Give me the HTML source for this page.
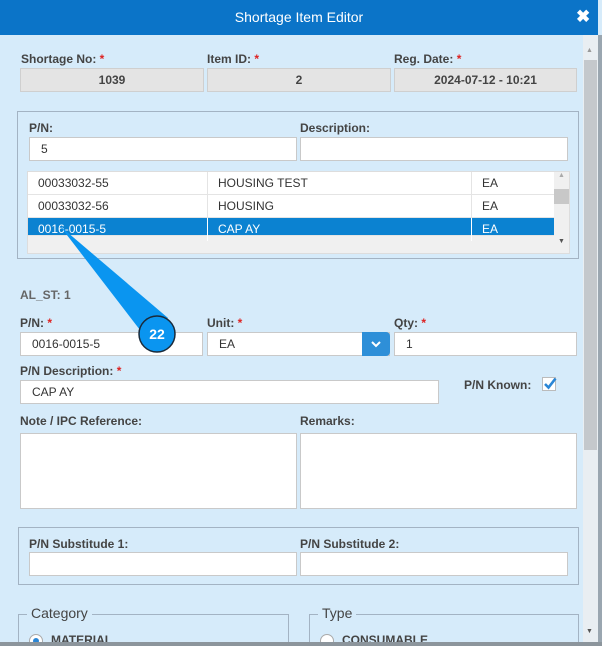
<!DOCTYPE html>
<html><head><style>
*{box-sizing:border-box;margin:0;padding:0}
html,body{width:602px;height:646px;overflow:hidden}
body{background:#d6ebfa;font-family:"Liberation Sans",Arial,sans-serif;font-size:12px;color:#333;position:relative}
.a{position:absolute}
.hd{left:0;top:0;width:598px;height:35px;background:#0b74c8;color:#fff;font-size:14px;text-align:center;line-height:35px}
.lb{font-weight:bold;font-size:12px;color:#444}
.lb i{color:#d22;font-style:normal}
.gb{background:#e4e4e4;border:1px solid #cfcfcf;height:24px;text-align:center;line-height:22px;font-weight:bold;color:#444}
.in{background:#fff;border:1px solid #c9c9c9;height:24px;line-height:22px;padding-left:11px;color:#333}
.fs{border:1px solid #a3b3c3}
.row{height:23px;line-height:22px;border-bottom:1px solid #e4e4e4;background:#fff}
.row span{position:absolute;top:0;padding-left:10px;height:23px;border-right:1px solid #e4e4e4}
.sel{background:#0b82d1;color:#fff}
</style></head><body>
<div class="a hd">Shortage Item Editor</div>
<div class="a" style="left:576px;top:7px;color:#fff;font-size:17px;font-weight:bold">✖</div>
<div class="a" style="left:598px;top:35px;width:4px;height:611px;background:#9aa6b0"></div>
<div class="a" style="left:583px;top:35px;width:15px;height:607px;background:#e9eef2"></div>
<div class="a" style="left:584px;top:60px;width:13px;height:390px;background:#c4c8cc"></div>
<div class="a" style="left:586px;top:47px;color:#999;font-size:7px">▲</div>
<div class="a" style="left:586px;top:628px;color:#555;font-size:7px">▼</div>

<div class="a lb" style="left:21px;top:52px">Shortage No: <i>*</i></div>
<div class="a lb" style="left:207px;top:52px">Item ID: <i>*</i></div>
<div class="a lb" style="left:394px;top:52px">Reg. Date: <i>*</i></div>
<div class="a gb" style="left:20px;top:68px;width:184px">1039</div>
<div class="a gb" style="left:207px;top:68px;width:184px">2</div>
<div class="a gb" style="left:394px;top:68px;width:183px">2024-07-12 - 10:21</div>

<div class="a fs" style="left:17px;top:111px;width:562px;height:148px"></div>
<div class="a lb" style="left:29px;top:121px">P/N:</div>
<div class="a lb" style="left:300px;top:121px">Description:</div>
<div class="a in" style="left:29px;top:137px;width:268px">5</div>
<div class="a in" style="left:300px;top:137px;width:268px"></div>
<div class="a" style="left:27px;top:171px;width:543px;height:83px;background:#f0f0f0;border:1px solid #ddd;overflow:hidden">
 <div class="a row" style="left:0;top:0;width:526px"><span style="left:0;width:180px">00033032-55</span><span style="left:180px;width:264px">HOUSING TEST</span><span style="left:444px;width:82px;border:0">EA</span></div>
 <div class="a row" style="left:0;top:23px;width:526px"><span style="left:0;width:180px">00033032-56</span><span style="left:180px;width:264px">HOUSING</span><span style="left:444px;width:82px;border:0">EA</span></div>
 <div class="a row sel" style="left:0;top:46px;width:526px;height:18px"><span style="left:0;width:180px;border-color:#fff">0016-0015-5</span><span style="left:180px;width:264px;border-color:#fff">CAP AY</span><span style="left:444px;width:82px;border:0">EA</span></div>
 <div class="a" style="left:526px;top:17px;width:15px;height:15px;background:#c8c8c8"></div>
 <div class="a" style="left:530px;top:0;color:#aaa;font-size:7px">▲</div>
 <div class="a" style="left:530px;top:66px;color:#555;font-size:7px">▼</div>
</div>

<div class="a lb" style="left:20px;top:288px;color:#666">AL_ST: 1</div>
<div class="a lb" style="left:20px;top:316px">P/N: <i>*</i></div>
<div class="a lb" style="left:207px;top:316px">Unit: <i>*</i></div>
<div class="a lb" style="left:394px;top:316px">Qty: <i>*</i></div>
<div class="a in" style="left:20px;top:332px;width:183px">0016-0015-5</div>
<div class="a in" style="left:207px;top:332px;width:183px">EA</div>
<div class="a" style="left:362px;top:332px;width:28px;height:24px;background:#2e8fd8;border-radius:0 4px 4px 0;color:#fff;text-align:center;line-height:24px;font-weight:bold">
<svg width="12" height="8" viewBox="0 0 12 8"><path d="M2 2l4 4 4-4" stroke="#fff" stroke-width="2" fill="none"/></svg></div>
<div class="a in" style="left:394px;top:332px;width:183px">1</div>
<div class="a lb" style="left:20px;top:364px">P/N Description: <i>*</i></div>
<div class="a in" style="left:20px;top:380px;width:419px">CAP AY</div>
<div class="a lb" style="left:464px;top:378px">P/N Known:</div>
<div class="a" style="left:542px;top:377px;width:14px;height:14px;background:#fff;border:1px solid #bbb"></div>
<svg class="a" style="left:542px;top:376px" width="16" height="16"><path d="M3 8l3.5 3.5 7-9" stroke="#2a86d6" stroke-width="2.6" fill="none"/></svg>
<div class="a lb" style="left:20px;top:414px">Note / IPC Reference:</div>
<div class="a lb" style="left:300px;top:414px">Remarks:</div>
<div class="a in" style="left:20px;top:433px;width:277px;height:76px"></div>
<div class="a in" style="left:300px;top:433px;width:277px;height:76px"></div>

<div class="a fs" style="left:18px;top:527px;width:561px;height:58px"></div>
<div class="a lb" style="left:29px;top:537px">P/N Substitude 1:</div>
<div class="a lb" style="left:300px;top:537px">P/N Substitude 2:</div>
<div class="a in" style="left:29px;top:552px;width:268px"></div>
<div class="a in" style="left:300px;top:552px;width:268px"></div>

<div class="a fs" style="left:18px;top:614px;width:271px;height:28px;border-bottom:0"></div>
<div class="a fs" style="left:309px;top:614px;width:270px;height:28px;border-bottom:0"></div>
<div class="a" style="left:27px;top:605px;background:#d6ebfa;padding:0 4px;font-size:14px;color:#444">Category</div>
<div class="a" style="left:318px;top:605px;background:#d6ebfa;padding:0 4px;font-size:14px;color:#444">Type</div>
<div class="a" style="left:29px;top:634px;width:14px;height:14px;border-radius:50%;background:#fff;border:1px solid #aaa"><div style="margin:3px;width:6px;height:6px;border-radius:50%;background:#2a86d6"></div></div>
<div class="a lb" style="left:51px;top:633px">MATERIAL</div>
<div class="a" style="left:320px;top:634px;width:14px;height:14px;border-radius:50%;background:#fff;border:1px solid #aaa"></div>
<div class="a lb" style="left:342px;top:633px">CONSUMABLE</div>
<div class="a" style="left:0;top:642px;width:602px;height:4px;background:#8c959c"></div>

<svg class="a" style="left:0;top:0" width="602" height="646">
<polygon points="60,226 140,330 168,318" fill="#0a95f0"/>
<circle cx="157" cy="334" r="18" fill="#0a95f0" stroke="#1a2a3a" stroke-width="1.5"/>
<text x="157" y="339" text-anchor="middle" fill="#fff" font-family="Liberation Sans" font-weight="bold" font-size="14">22</text>
</svg>
</body></html>
